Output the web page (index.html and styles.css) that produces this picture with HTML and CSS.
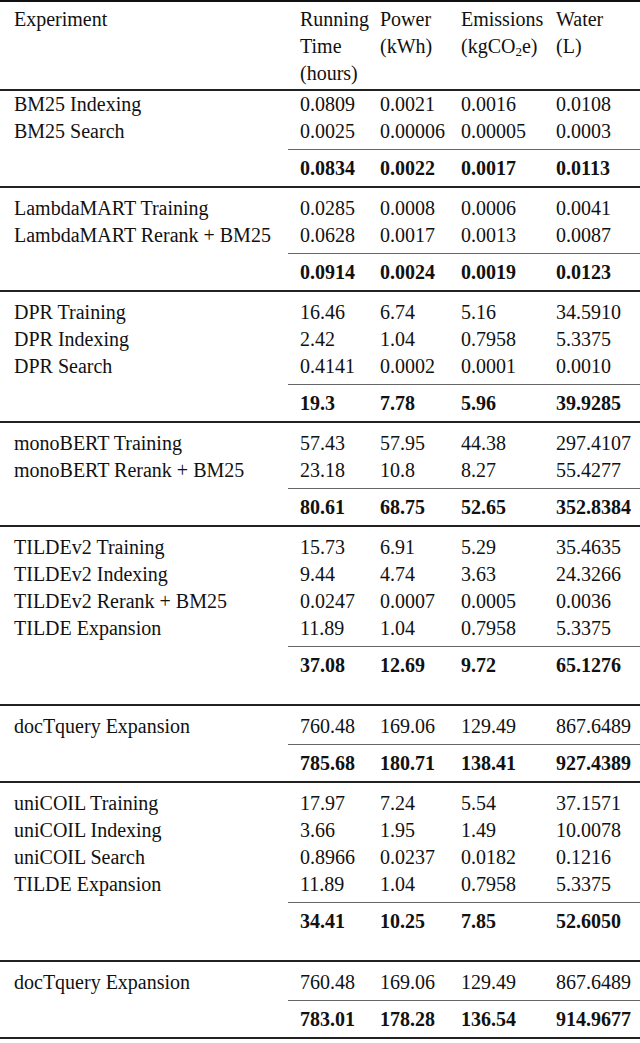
FILE: index.html
```html
<!DOCTYPE html>
<html>
<head>
<meta charset="utf-8">
<link rel="stylesheet" href="styles.css">
</head>
<body>
<table class="tbl">
  <colgroup>
    <col class="c-name"><col class="c-time"><col class="c-power"><col class="c-em"><col class="c-water">
  </colgroup>
  <thead>
    <tr>
      <th>Experiment</th>
      <th>Running<br>Time<br>(hours)</th>
      <th>Power<br>(kWh)</th>
      <th>Emissions<br>(kgCO<sub>2</sub>e)</th>
      <th>Water<br>(L)</th>
    </tr>
  </thead>
  <tbody class="grp grp-first">
    <tr class="first"><td>BM25 Indexing</td><td>0.0809</td><td>0.0021</td><td>0.0016</td><td>0.0108</td></tr>
    <tr class="last"><td>BM25 Search</td><td>0.0025</td><td>0.00006</td><td>0.00005</td><td>0.0003</td></tr>
    <tr class="total"><td></td><td>0.0834</td><td>0.0022</td><td>0.0017</td><td>0.0113</td></tr>
  </tbody>
  <tbody class="grp">
    <tr class="first"><td>LambdaMART Training</td><td>0.0285</td><td>0.0008</td><td>0.0006</td><td>0.0041</td></tr>
    <tr class="last"><td>LambdaMART Rerank + BM25</td><td>0.0628</td><td>0.0017</td><td>0.0013</td><td>0.0087</td></tr>
    <tr class="total"><td></td><td>0.0914</td><td>0.0024</td><td>0.0019</td><td>0.0123</td></tr>
  </tbody>
  <tbody class="grp">
    <tr class="first"><td>DPR Training</td><td>16.46</td><td>6.74</td><td>5.16</td><td>34.5910</td></tr>
    <tr><td>DPR Indexing</td><td>2.42</td><td>1.04</td><td>0.7958</td><td>5.3375</td></tr>
    <tr class="last"><td>DPR Search</td><td>0.4141</td><td>0.0002</td><td>0.0001</td><td>0.0010</td></tr>
    <tr class="total"><td></td><td>19.3</td><td>7.78</td><td>5.96</td><td>39.9285</td></tr>
  </tbody>
  <tbody class="grp">
    <tr class="first"><td>monoBERT Training</td><td>57.43</td><td>57.95</td><td>44.38</td><td>297.4107</td></tr>
    <tr class="last"><td>monoBERT Rerank + BM25</td><td>23.18</td><td>10.8</td><td>8.27</td><td>55.4277</td></tr>
    <tr class="total"><td></td><td>80.61</td><td>68.75</td><td>52.65</td><td>352.8384</td></tr>
  </tbody>
  <tbody class="grp">
    <tr class="first"><td>TILDEv2 Training</td><td>15.73</td><td>6.91</td><td>5.29</td><td>35.4635</td></tr>
    <tr><td>TILDEv2 Indexing</td><td>9.44</td><td>4.74</td><td>3.63</td><td>24.3266</td></tr>
    <tr><td>TILDEv2 Rerank + BM25</td><td>0.0247</td><td>0.0007</td><td>0.0005</td><td>0.0036</td></tr>
    <tr class="last"><td>TILDE Expansion</td><td>11.89</td><td>1.04</td><td>0.7958</td><td>5.3375</td></tr>
    <tr class="total spaced"><td></td><td>37.08</td><td>12.69</td><td>9.72</td><td>65.1276</td></tr>
  </tbody>
  <tbody class="grp">
    <tr class="first last"><td>docTquery Expansion</td><td>760.48</td><td>169.06</td><td>129.49</td><td>867.6489</td></tr>
    <tr class="total"><td></td><td>785.68</td><td>180.71</td><td>138.41</td><td>927.4389</td></tr>
  </tbody>
  <tbody class="grp">
    <tr class="first"><td>uniCOIL Training</td><td>17.97</td><td>7.24</td><td>5.54</td><td>37.1571</td></tr>
    <tr><td>uniCOIL Indexing</td><td>3.66</td><td>1.95</td><td>1.49</td><td>10.0078</td></tr>
    <tr><td>uniCOIL Search</td><td>0.8966</td><td>0.0237</td><td>0.0182</td><td>0.1216</td></tr>
    <tr class="last"><td>TILDE Expansion</td><td>11.89</td><td>1.04</td><td>0.7958</td><td>5.3375</td></tr>
    <tr class="total spaced"><td></td><td>34.41</td><td>10.25</td><td>7.85</td><td>52.6050</td></tr>
  </tbody>
  <tbody class="grp grp-end">
    <tr class="first last"><td>docTquery Expansion</td><td>760.48</td><td>169.06</td><td>129.49</td><td>867.6489</td></tr>
    <tr class="total"><td></td><td>783.01</td><td>178.28</td><td>136.54</td><td>914.9677</td></tr>
  </tbody>
</table>
</body>
</html>
```

FILE: styles.css
```css
html, body {
  margin: 0;
  padding: 0;
  background: #ffffff;
}

body {
  font-family: "Liberation Serif", "Times New Roman", serif;
  font-size: 20px;
  color: #111111;
}

.tbl {
  width: 640px;
  table-layout: fixed;
  border-collapse: separate;
  border-spacing: 0;
  border-top: 2px solid #111111;
}

.c-name { width: 288px; }
.c-time { width: 80px; }
.c-power { width: 81px; }
.c-em { width: 95px; }
.c-water { width: 96px; }

th, td {
  text-align: left;
  vertical-align: top;
  line-height: 27px;
  padding: 0 0 0 12px;
  white-space: nowrap;
  overflow: visible;
}

th:first-child, td:first-child {
  padding-left: 14px;
}

th {
  font-weight: normal;
  padding-top: 4px;
  padding-bottom: 2px;
  border-bottom: 2px solid #222222;
}

th sub {
  font-size: 13px;
  line-height: 0;
  vertical-align: -3px;
}

.grp .first td {
  padding-top: 7px;
}

.grp-first .first td {
  padding-top: 0;
}

.grp .last td {
  padding-bottom: 4px;
}

.grp .total td {
  font-weight: bold;
  padding-top: 5px;
  padding-bottom: 4px;
  border-top: 1px solid #666666;
  border-bottom: 2px solid #222222;
}

.grp .total td:first-child {
  border-top-color: transparent;
}

.grp .total.spaced td {
  padding-bottom: 25px;
}
```
